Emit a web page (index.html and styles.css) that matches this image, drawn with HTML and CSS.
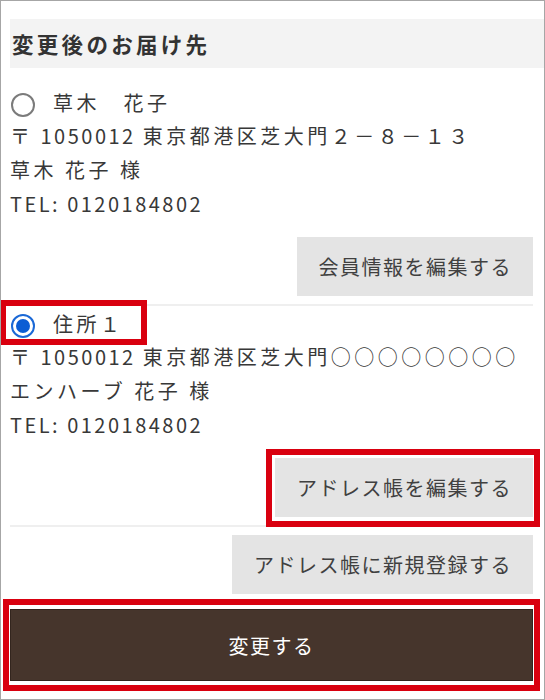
FILE: index.html
```html
<!DOCTYPE html>
<html lang="ja">
<head>
<meta charset="utf-8">
<title>変更後のお届け先</title>
<link rel="stylesheet" href="styles.css">
</head>
<body>
<div class="frame">
  <h2 class="title">変更後のお届け先</h2>

  <div class="addr">
    <div class="opt">
      <span class="radio"></span>
      <span class="opt-label">草木　花子</span>
    </div>
    <p class="line">〒<span class="lat"> 1050012 </span>東京都港区芝大門２－８－１３</p>
    <p class="line">草木 花子 様</p>
    <p class="line"><span class="lat">TEL: 0120184802</span></p>
    <div class="actions">
      <button class="btn" type="button">会員情報を編集する</button>
    </div>
  </div>

  <div class="addr">
    <div class="opt mark mark-opt">
      <span class="radio checked"></span>
      <span class="opt-label">住所１</span>
    </div>
    <p class="line">〒<span class="lat"> 1050012 </span>東京都港区芝大門○○○○○○○○</p>
    <p class="line">エンハーブ 花子 様</p>
    <p class="line"><span class="lat">TEL: 0120184802</span></p>
    <div class="actions">
      <button class="btn mark mark-btn" type="button">アドレス帳を編集する</button>
    </div>
  </div>

  <div class="actions actions-new">
    <button class="btn" type="button">アドレス帳に新規登録する</button>
  </div>

  <button class="submit mark mark-submit" type="button">変更する</button>
</div>
</body>
</html>
```

FILE: styles.css
```css
html, body {
  margin: 0;
  padding: 0;
  background: #ffffff;
}

body {
  font-family: "Noto Sans CJK JP", "Noto Sans", sans-serif;
  color: #383838;
}

.frame {
  width: 545px;
  height: 700px;
  box-sizing: border-box;
  border: 1px solid #a6a6a6;
  padding: 18px 11px 0 9px;
  overflow: hidden;
}

.title {
  margin: 0 -11px 17px 0;
  height: 49px;
  line-height: 49px;
  padding-left: 2px;
  background: #f3f3f3;
  font-size: 21.5px;
  font-weight: 700;
  letter-spacing: 3.3px;
  color: #333333;
}

.addr {
  padding-bottom: 8px;
  border-bottom: 2px solid #efefef;
}

.opt {
  display: flex;
  align-items: center;
  height: 34px;
  font-size: 20px;
  letter-spacing: 3.5px;
}

.radio {
  width: 24px;
  height: 24px;
  box-sizing: border-box;
  border: 2px solid #7b7b7b;
  border-radius: 50%;
  margin: 5px 18px 0 1px;
  flex: none;
  display: flex;
  align-items: center;
  justify-content: center;
}

.radio.checked {
  border-color: #1a68d6;
}

.radio.checked::before {
  content: "";
  width: 14px;
  height: 14px;
  border-radius: 50%;
  background: #0b5dd4;
}

.line {
  margin: 0;
  height: 34px;
  line-height: 34px;
  font-size: 20px;
  letter-spacing: 3.5px;
  white-space: nowrap;
}

.lat {
  letter-spacing: 2.5px;
}

.actions {
  display: flex;
  justify-content: flex-end;
  margin-top: 16px;
}

.actions-new {
  margin-top: 8px;
}

.btn {
  height: 59px;
  padding: 0 21px 0 22px;
  border: none;
  border-radius: 0;
  background: #e4e4e4;
  color: #404040;
  font-family: "Noto Sans CJK JP", "Noto Sans", sans-serif;
  font-size: 20px;
  letter-spacing: 1.5px;
}

.submit {
  display: block;
  width: 100%;
  height: 72px;
  margin-top: 15px;
  padding: 0;
  border: 1px solid #33251e;
  border-radius: 0;
  background: #46352c;
  color: #ffffff;
  font-family: "Noto Sans CJK JP", "Noto Sans", sans-serif;
  font-size: 20px;
  letter-spacing: 1.5px;
}

/* red annotation frames drawn over the content */
.mark {
  position: relative;
}

.mark::after {
  content: "";
  position: absolute;
  box-sizing: border-box;
  border: 6px solid #d9000f;
  pointer-events: none;
}

.mark-opt::after {
  top: -6px;
  bottom: -5px;
  left: -10px;
  width: 147px;
}

.mark-btn::after {
  top: -9px;
  bottom: -10px;
  left: -9px;
  right: -7px;
}

.mark-submit::after {
  top: -11px;
  bottom: -11px;
  left: -8px;
  right: -8px;
}
```
